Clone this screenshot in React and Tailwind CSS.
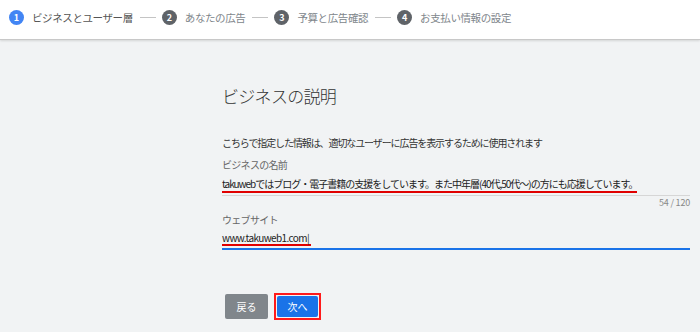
import React from 'react';

const steps = [
    { n: 1, label: 'ビジネスとユーザー層', active: true },
    { n: 2, label: 'あなたの広告' },
    { n: 3, label: '予算と広告確認' },
    { n: 4, label: 'お支払い情報の設定' },
];

const font = { fontFamily: '"Noto Sans CJK JP", "Noto Sans", sans-serif' };

const App = () => {
    return (
        <div className="w-[700px] h-[332px] bg-[#f1f3f4] overflow-hidden" style={font}>
            <div className="h-[40px] bg-white border-b border-[#c8c8c8] shadow-[0_1px_2px_rgba(0,0,0,0.12)] flex items-center pl-[9px] pb-[4px]">
                {steps.map((s, i) => (
                    <div key={s.n} className="flex items-center">
                        {i > 0 && <div className="w-[16px] h-px bg-[#c4c4c4] ml-[7px] mr-[6px]" />}
                        <span
                            className={`w-[15px] h-[15px] rounded-full flex items-center justify-center text-[9px] font-bold text-white ${s.active ? 'bg-[#4285f4]' : 'bg-[#5f6368]'}`}
                        >
                            {s.n}
                        </span>
                        <span className={`ml-[8px] text-[10.5px] tracking-[-0.4px] ${s.active ? 'text-[#555]' : 'text-[#80868b]'}`}>
                            {s.label}
                        </span>
                    </div>
                ))}
            </div>

            <div className="ml-[222px] w-[468px]">
                <h1 className="mt-[44px] text-[17px] leading-[24px] tracking-[-0.7px] font-light text-[#333]">ビジネスの説明</h1>
                <p className="mt-[28px] text-[10px] leading-[14px] tracking-[-1.1px] text-[#333]">
                    こちらで指定した情報は、適切なユーザーに広告を表示するために使用されます
                </p>

                <div className="mt-[8px] text-[10px] leading-[14px] tracking-[-0.7px] text-[#666]">ビジネスの名前</div>
                <div className="mt-[5px] flex border-b border-[#d6d6d6] pb-[2px]">
                    <span className="whitespace-nowrap text-[10px] leading-[14px] tracking-[-1px] text-[#222] border-b-2 border-[#e00000]">
                        takuwebではブログ・電子書籍の支援をしています。また中年層(40代,50代～)の方にも応援しています。
                    </span>
                </div>
                <div className="mt-[1px] text-right text-[9px] leading-[12px] tracking-[-0.2px] text-[#888]">54 / 120</div>

                <div className="mt-[4px] text-[10px] leading-[14px] tracking-[-0.7px] text-[#666]">ウェブサイト</div>
                <div className="mt-[4px] flex border-b-2 border-[#1a73e8] pb-[2px]">
                    <span className="text-[10px] leading-[13px] tracking-[-0.6px] text-[#222] border-b-2 border-[#e00000] pr-[2px]">
                        www.takuweb1.com<span className="text-[#333]">|</span>
                    </span>
                </div>

                <div className="mt-[43px] ml-[3px] flex items-center gap-[6px]">
                    <button className="w-[43px] h-[25px] bg-[#80868b] text-white text-[10px] rounded-[2px]">戻る</button>
                    <div className="border-[2px] border-[#ff1a1a] p-px">
                        <button className="w-[41px] h-[21px] bg-[#1a73e8] text-white text-[10px] rounded-[2px] block">次へ</button>
                    </div>
                </div>
            </div>
        </div>
    );
};

export default App;
